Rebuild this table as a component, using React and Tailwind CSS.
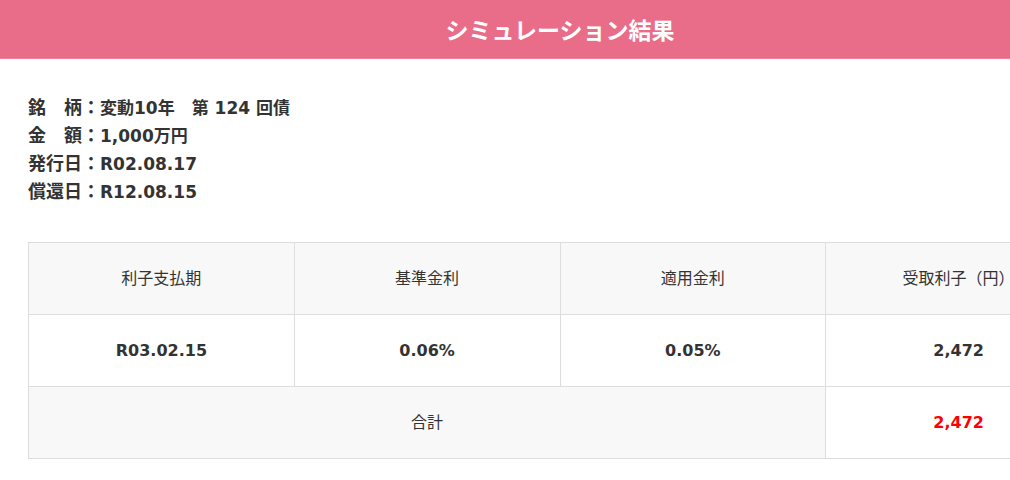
const info = [
  ["銘\u3000柄", "変動10年\u3000第 124 回債"],
  ["金\u3000額", "1,000万円"],
  ["発行日", "R02.08.17"],
  ["償還日", "R12.08.15"],
];

export default function App() {
  return (
    <div
      className="w-[1120px] bg-white text-[#333]"
      style={{ fontFamily: '"DejaVu Sans", "Noto Sans CJK JP", sans-serif' }}
    >
      <div className="h-[59px] bg-[#e96d89] border-b border-[#ec8199] flex items-center justify-center">
        <h1 className="text-[23px] font-bold text-white" style={{ fontFamily: '"Noto Sans CJK JP", sans-serif' }}>
          シミュレーション結果
        </h1>
      </div>

      <div className="px-[28px] pt-[35px] pb-[40px]">
        <div className="font-bold leading-[28px]">
          {info.map(([k, v]) => (
            <p key={k} className="text-[17px]">
              <span className="text-[18px]">{k}：</span>
              {v}
            </p>
          ))}
        </div>

        <table className="mt-[36px] w-full border-collapse table-fixed text-[16px]">
          <thead>
            <tr className="bg-[#f8f8f8]">
              {["利子支払期", "基準金利", "適用金利", "受取利子（円）"].map((h) => (
                <th key={h} className="h-[72px] border border-[#ddd] font-normal text-center">
                  {h}
                </th>
              ))}
            </tr>
          </thead>
          <tbody>
            <tr>
              {["R03.02.15", "0.06%", "0.05%", "2,472"].map((v, i) => (
                <td key={i} className="h-[72px] border border-[#ddd] font-bold text-center">
                  {v}
                </td>
              ))}
            </tr>
            <tr>
              <td colSpan={3} className="h-[72px] border border-[#ddd] bg-[#f8f8f8] text-center">
                合計
              </td>
              <td className="h-[72px] border border-[#ddd] text-center font-bold text-[#ff0000]">2,472</td>
            </tr>
          </tbody>
        </table>
      </div>
    </div>
  );
}
